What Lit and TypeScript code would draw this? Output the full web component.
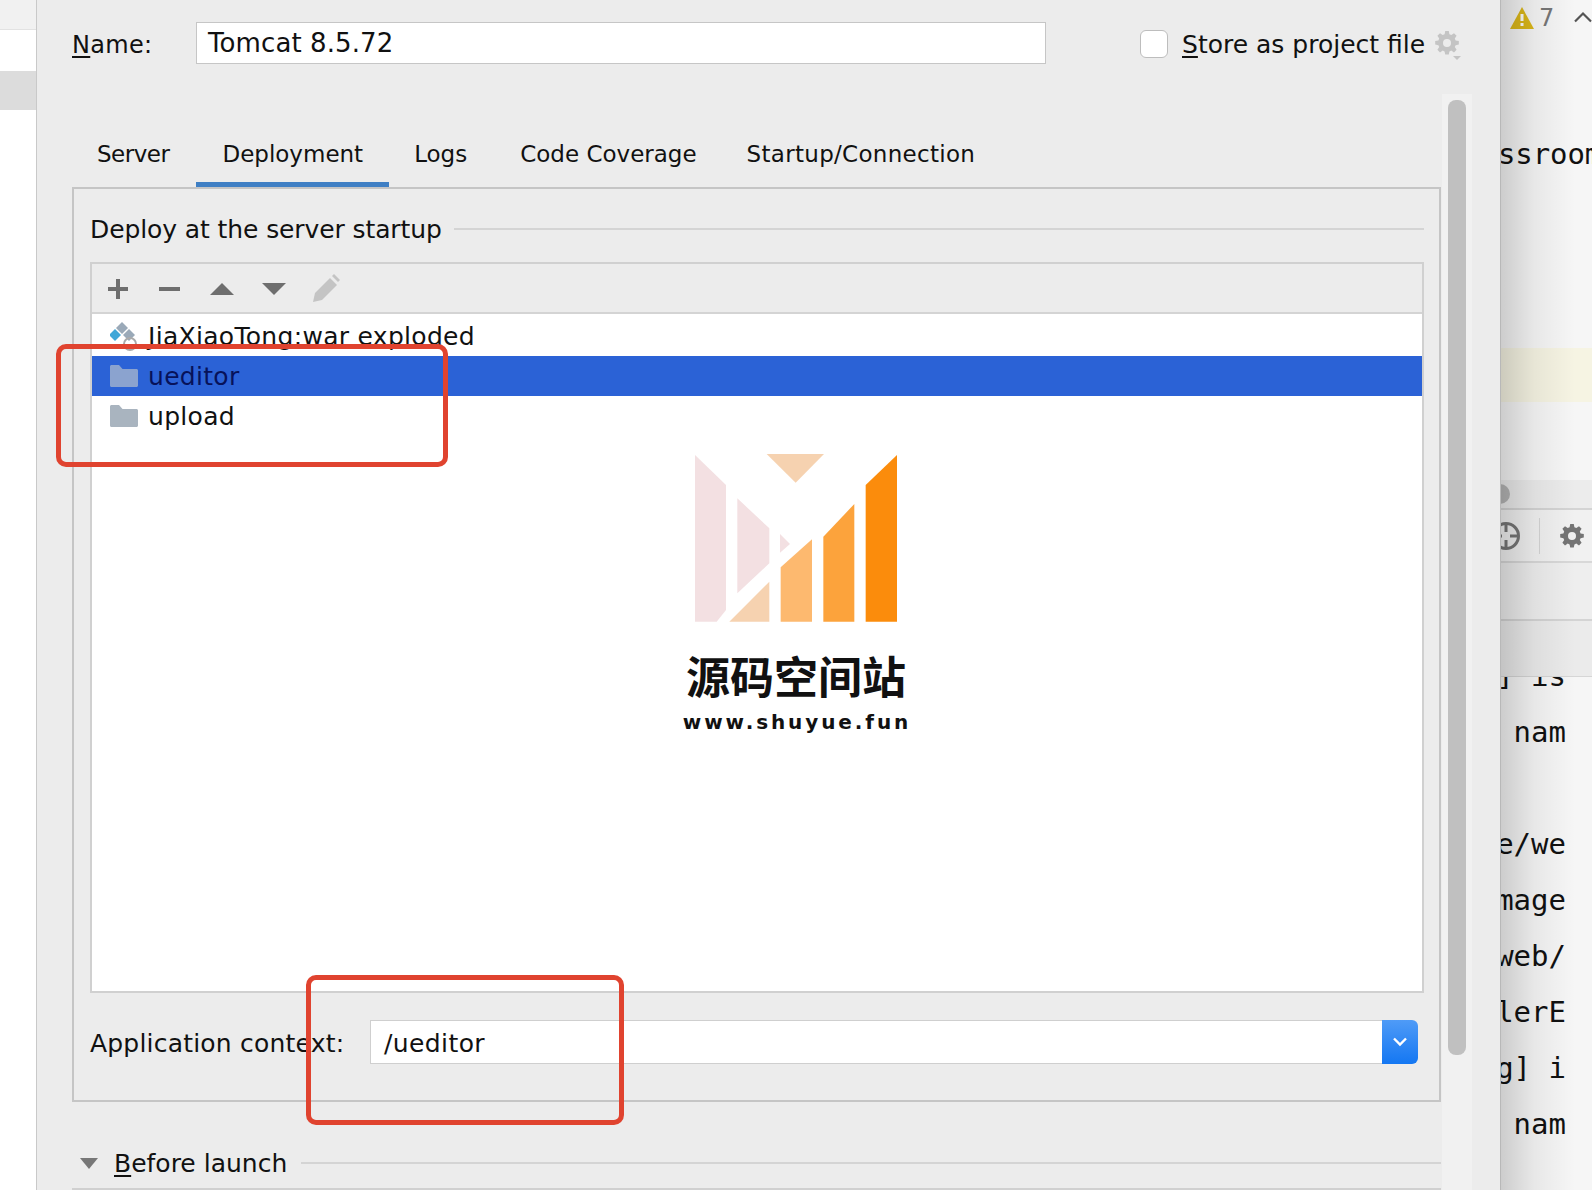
import { LitElement, html, css, svg } from "lit";
import { customElement } from "lit/decorators.js";

const gear = (c: string) => svg`<path fill="${c}" fill-rule="evenodd" d="M10.2 0h3.6l.6 3.2 1.9.8 2.7-1.8 2.6 2.6-1.8 2.7.8 1.9 3.2.6v3.6l-3.2.6-.8 1.9 1.8 2.7-2.6 2.6-2.7-1.8-1.9.8-.6 3.2h-3.6l-.6-3.2-1.9-.8-2.7 1.8-2.6-2.6 1.8-2.7-.8-1.9-3.2-.6v-3.6l3.2-.6.8-1.9-1.8-2.7 2.6-2.6 2.7 1.8 1.9-.8zM12 8a4 4 0 1 0 0 8 4 4 0 0 0 0-8z"/>`;

const folder = (c: string) => html`<svg class="folder" viewBox="0 0 28 22"><path fill="${c}" d="M0 1.500C0 .7.7 0 1.500 0h7.500l3.500 4H26.500c.8 0 1.500.7 1.500 1.500V20.500c0 .8-.7 1.500-1.500 1.500h-25C.7 22 0 21.300 0 20.500z"/></svg>`;

@customElement("app-root")
export class AppRoot extends LitElement {
  static styles = css`
    :host { display: flex; width: 1592px; height: 1190px; overflow: hidden; position: relative; font-family: "DejaVu Sans", sans-serif; font-size: 25px; color: #111; background: #fff; }
    u { text-underline-offset: 3px; text-decoration-thickness: 2px; }

    .strip { width: 36px; flex: none; display: flex; flex-direction: column; background: #fff; }
    .strip-top { height: 29px; background: #f1f1f1; border-bottom: 1px solid #e2e2e2; }
    .strip-sel { height: 39px; margin-top: 41px; background: #dcdcdc; }

    .dialog { width: 1464px; flex: none; display: flex; flex-direction: column; background: #ececec; border-left: 1px solid #c9c9c9; box-sizing: border-box; }
    .name-row { height: 94px; flex: none; display: flex; align-items: flex-start; padding-left: 35px; box-sizing: border-box; }
    .name-label { width: 124px; margin-top: 30px; line-height: 30px; font-size: 24px; letter-spacing: .3px; }
    .name-input { width: 850px; height: 42px; margin-top: 22px; background: #fff; border: 1px solid #c6c6c6; box-sizing: border-box; padding-left: 11px; line-height: 40px; font-size: 26px; letter-spacing: .1px; }
    .check { width: 28px; height: 28px; margin: 30px 0 0 94px; background: #fff; border: 1px solid #bdbdbd; border-radius: 6px; box-sizing: border-box; }
    .store { margin: 30px 0 0 14px; line-height: 30px; letter-spacing: 0; white-space: nowrap; }
    .store-gear { width: 28px; height: 30px; margin: 30px 0 0 9px; }

    .body { flex: 1; display: flex; min-height: 0; }
    .main { width: 1369px; margin-left: 35px; flex: none; display: flex; flex-direction: column; }
    .track { width: 30px; flex: none; background: #f1f1f1; margin-left: 1px; padding: 6px 6px 0; box-sizing: border-box; }
    .thumb { height: 955px; background: #c0c0c0; border-radius: 8px; }

    .tabs { height: 93px; flex: none; display: flex; font-size: 23px; }
    .tab { padding: 45px 25px 0; line-height: 30px; box-sizing: border-box; height: 94px; white-space: nowrap; }
    .tab.on { border-bottom: 6px solid #3f7fc4; padding: 45px 26px 0; }
    .tab.tight { letter-spacing: -.5px; padding-right: 27px; }
    .tab.logs { padding-right: 28px; }
    .tab.wide { letter-spacing: .3px; }

    .panel { height: 915px; flex: none; border: 2px solid #c5c5c5; box-sizing: border-box; padding: 0 15px 0 16px; display: flex; flex-direction: column; }
    .group-title { height: 73px; flex: none; display: flex; align-items: center; gap: 12px; padding-top: 7px; box-sizing: border-box; white-space: nowrap; letter-spacing: -.1px; }
    .rule { flex: 1; height: 2px; background: #d4d4d4; }

    .list { height: 731px; flex: none; border: 2px solid #d0d0d0; box-sizing: border-box; display: flex; flex-direction: column; background: #fff; }
    .toolbar { height: 48px; flex: none; background: #ececec; border-bottom: 2px solid #d4d4d4; display: flex; align-items: center; }
    .toolbar svg { display: block; flex: none; }
    .row { height: 40px; flex: none; display: flex; align-items: center; padding-left: 18px; white-space: nowrap; letter-spacing: .3px; }
    .row.first { height: 42px; padding-top: 3px; box-sizing: border-box; }
    .row.sel { background: #2b62d6; color: #07125a; }
    .folder { width: 28px; height: 22px; flex: none; margin-right: 10px; }
    .module { width: 30px; height: 30px; flex: none; margin-right: 8px; }

    .ctx-row { height: 108px; flex: none; display: flex; align-items: flex-start; padding-top: 27px; box-sizing: border-box; }
    .ctx-label { width: 280px; flex: none; line-height: 48px; white-space: nowrap; letter-spacing: .2px; }
    .ctx-input { width: 1012px; height: 44px; flex: none; background: #fff; border: 1px solid #cfcfcf; border-right: 0; box-sizing: border-box; padding-left: 13px; line-height: 46px; letter-spacing: .4px; }
    .ctx-btn { width: 36px; height: 44px; flex: none; border-radius: 0 6px 6px 0; background: linear-gradient(#4f9bf7, #1477f2); display: flex; align-items: center; justify-content: center; }

    .before { height: 40px; margin-top: 41px; flex: none; display: flex; align-items: center; padding-left: 8px; box-sizing: border-box; white-space: nowrap; }
    .before-tri { width: 18px; height: 11px; flex: none; margin-right: 16px; }
    .before .rule { margin-left: 14px; }
    .bottom-rule { height: 2px; flex: none; background: #d0d0d0; margin-top: 5px; }

    .editor { flex: 1; min-width: 0; position: relative; background: #f6f6f6; display: flex; flex-direction: column; font-family: "DejaVu Sans Mono", monospace; font-size: 29px; overflow: hidden; }
    .warn { height: 38px; flex: none; display: flex; align-items: flex-start; font-family: "DejaVu Sans", sans-serif; color: #777; font-size: 24px; padding-left: 10px; box-sizing: border-box; }
    .warn-tri { width: 24px; height: 22px; margin-top: 7px; flex: none; }
    .warn-n { margin-left: 5px; line-height: 36px; width: 37px; }
    .warn-up { width: 18px; height: 12px; margin-top: 11px; flex: none; }
    .ssroom { height: 58px; margin: 87px 0 0 -2px; flex: none; line-height: 58px; color: #111; letter-spacing: -.1px; white-space: nowrap; }
    .hl { height: 54px; margin-top: 165px; flex: none; background: #f6f4e3; }
    .scrollbar { height: 28px; margin-top: 78px; flex: none; background: #ececec; border-bottom: 2px solid #d4d4d4; display: flex; align-items: center; }
    .scrollbar i { width: 10px; height: 20px; border-radius: 0 10px 10px 0; background: #b5b5b5; display: block; }
    .tools { height: 51px; flex: none; background: #f1f1f1; border-bottom: 2px solid #d8d8d8; display: flex; align-items: center; }
    .tools svg { flex: none; }
    .tools .sep { width: 1px; height: 36px; background: #d5d5d5; margin: 0 20px 0 19px; flex: none; }
    .gap { height: 58px; flex: none; background: #eeeeee; border-bottom: 2px solid #d4d4d4; box-sizing: border-box; }
    .tabbar { height: 56px; flex: none; background: #ebebeb; border-bottom: 1px solid #d6d6d6; box-sizing: border-box; }
    .line { height: 56px; flex: none; display: flex; justify-content: flex-end; align-items: center; padding-right: 26px; white-space: pre; color: #111; overflow: hidden; }
    .line.cut { height: 27px; align-items: flex-end; line-height: 56px; }
    .shadow { position: absolute; inset: 0 auto 0 0; width: 75px; border-left: 1px solid #b8b8b8; box-sizing: border-box; background: linear-gradient(90deg, rgba(0,0,0,.17), rgba(0,0,0,.06) 45%, rgba(0,0,0,0)); pointer-events: none; }

    .mark { position: absolute; border: 5px solid #e0432f; border-radius: 10px; box-sizing: border-box; pointer-events: none; }
    .mark.a { left: 56px; top: 344px; width: 392px; height: 123px; }
    .mark.b { left: 306px; top: 975px; width: 318px; height: 150px; }

    .wm { position: absolute; left: 660px; top: 430px; width: 270px; height: 320px; display: flex; flex-direction: column; align-items: center; pointer-events: none; }
    .wm svg { width: 270px; height: 198px; flex: none; display: block; }
    .wm-cn { font-family: "Noto Sans CJK SC", sans-serif; font-weight: 700; font-size: 44px; line-height: 50px; margin: 22px 0 0 2px; color: #111; white-space: nowrap; }
    .wm-url { font-family: "DejaVu Sans", sans-serif; font-weight: 700; font-size: 20px; letter-spacing: 2.9px; line-height: 26px; margin: 9px 0 0 4px; color: #111; white-space: nowrap; }
  `;

  render() {
    return html`
      <div class="strip"><div class="strip-top"></div><div class="strip-sel"></div></div>

      <div class="dialog">
        <div class="name-row">
          <div class="name-label"><u>N</u>ame:</div>
          <div class="name-input">Tomcat 8.5.72</div>
          <div class="check"></div>
          <div class="store"><u>S</u>tore as project file</div>
          <svg class="store-gear" viewBox="0 0 28 30">
            <g transform="translate(1 1)">${gear("#c4c4c4")}</g>
            <path fill="#c4c4c4" d="M19 26h8l-4 4z"/>
          </svg>
        </div>

        <div class="body">
          <div class="main">
            <div class="tabs">
              <div class="tab tight">Server</div>
              <div class="tab on">Deployment</div>
              <div class="tab logs">Logs</div>
              <div class="tab">Code Coverage</div>
              <div class="tab wide">Startup/Connection</div>
            </div>

            <div class="panel">
              <div class="group-title">Deploy at the server startup<div class="rule"></div></div>

              <div class="list">
                <div class="toolbar">
                  <svg width="280" height="47" viewBox="0 1 280 47">
                    <path fill="#6e6e6e" d="M24 15h4v8h8v4h-8v8h-4v-8h-8v-4h8z"/>
                    <rect x="67" y="23" width="21" height="4" fill="#6e6e6e"/>
                    <path fill="#6e6e6e" d="M118 31l12-12 12 12z"/>
                    <path fill="#6e6e6e" d="M170 19h24l-12 12z"/>
                    <path fill="#c4c4c4" d="M221 38l2-9 15-15 7 7-15 15z"/>
                    <path fill="#c4c4c4" d="M240 12l2-2 6 6-2 2z"/>
                  </svg>
                </div>
                <div class="row first">
                  <svg class="module" viewBox="0 0 30 30">
                    <path fill="#9aa9b8" d="M12 0l6 6-6 6-6-6z"/>
                    <path fill="#3fa7d8" d="M5 7l6 6-6 6-6-6z"/>
                    <path fill="#9aa9b8" d="M19 7l6 6-6 6-6-6z"/>
                    <circle cx="20" cy="22" r="6" fill="none" stroke="#aaa" stroke-width="2"/>
                  </svg>JiaXiaoTong:war exploded
                </div>
                <div class="row sel">${folder("#8ba3cf")}ueditor</div>
                <div class="row">${folder("#a9b4bf")}upload</div>
              </div>

              <div class="ctx-row">
                <div class="ctx-label">Application context:</div>
                <div class="ctx-input">/ueditor</div>
                <div class="ctx-btn">
                  <svg width="16" height="10" viewBox="0 0 16 10"><path fill="none" stroke="#fff" stroke-width="2.400" d="M2 1.500l6 6 6-6"/></svg>
                </div>
              </div>
            </div>

            <div class="before">
              <svg class="before-tri" viewBox="0 0 18 11"><path fill="#777" d="M0 0h18L9 11z"/></svg>
              <span><u>B</u>efore launch</span>
              <div class="rule"></div>
            </div>
            <div class="bottom-rule"></div>
          </div>
          <div class="track"><div class="thumb"></div></div>
        </div>
      </div>

      <div class="editor">
        <div class="warn">
          <svg class="warn-tri" viewBox="0 0 24 22"><path fill="#dcb81a" d="M12 0l12 22H0z"/><rect x="10.500" y="7" width="3" height="7" fill="#fff"/><rect x="10.500" y="16" width="3" height="3" fill="#fff"/></svg>
          <span class="warn-n">7</span>
          <svg class="warn-up" viewBox="0 0 18 12"><path fill="none" stroke="#555" stroke-width="2.200" d="M1 10.500l8-8 8 8"/></svg>
        </div>
        <div class="ssroom">ssroom</div>
        <div class="hl"></div>
        <div class="scrollbar"><i></i></div>
        <div class="tools">
          <svg width="20" height="30" viewBox="0 0 20 30"><circle cx="6" cy="15" r="12.500" fill="none" stroke="#777" stroke-width="3"/><path stroke="#777" stroke-width="3" d="M6 2v9M6 19v9M-7 15h9M10 15h9"/></svg>
          <div class="sep"></div>
          <svg width="24" height="24" viewBox="0 0 24 24">${gear("#757575")}</svg>
        </div>
        <div class="gap"></div>
        <div class="tabbar"></div>
        <div class="line cut"><span>] is</span></div>
        <div class="line">nam</div>
        <div class="line"> </div>
        <div class="line">e/we</div>
        <div class="line">mage</div>
        <div class="line">web/</div>
        <div class="line">lerE</div>
        <div class="line">g] i</div>
        <div class="line">nam</div>
        <div class="shadow"></div>
      </div>

      <div class="wm">
        <svg viewBox="0 0 810 594">
          <path fill="#f3e0e2" d="M105 75L198 165V540L170 575H105z"/>
          <path fill="#f3e0e2" d="M232 205L328 295V400L232 490z"/>
          <path fill="#f3e0e2" d="M360 312L390 342L360 368z"/>
          <path fill="#f6d2b0" d="M320 72H492L407 158z"/>
          <path fill="#f6d2b0" d="M328 455V575H208z"/>
          <path fill="#fdb96f" d="M362 412L456 328V575H362z"/>
          <path fill="#fca33c" d="M490 320L583 222V575H490z"/>
          <path fill="#fb8c0c" d="M617 165L711 75V575H617z"/>
        </svg>
        <div class="wm-cn">源码空间站</div>
        <div class="wm-url">www.shuyue.fun</div>
      </div>

      <div class="mark a"></div>
      <div class="mark b"></div>
    `;
  }
}
